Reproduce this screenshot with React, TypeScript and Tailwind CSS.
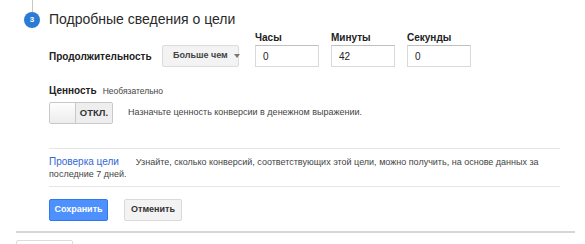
const font = { fontFamily: '"Liberation Sans", Arial, sans-serif' };

function TimeField({ label, value }: { label: string; value: string }) {
  return (
    <div className="flex flex-col w-[64px]">
      <span className="text-[10px] leading-[12px] font-bold text-[#222] mb-[1px]">{label}</span>
      <div className="h-[22px] border border-[#d9d9d9] border-t-[#c0c0c0] bg-white pl-[7px] flex items-center text-[10px] text-[#222]">
        {value}
      </div>
    </div>
  );
}

export default function App() {
  return (
    <div className="w-[585px] h-[244px] bg-white overflow-hidden" style={font}>
      {/* step header */}
      <div className="flex items-start pl-[24px]">
        <div className="flex flex-col items-center w-[16px]">
          <div className="w-px h-[12px] bg-[#c6c6c6]" />
          <div className="w-[16px] h-[16px] rounded-full bg-[#2b7bd4] text-white text-[8px] font-bold flex items-center justify-center leading-none">
            3
          </div>
        </div>
        <h2 className="ml-[9px] mt-[10px] text-[14px] leading-[18px] text-[#2a2a2a]">Подробные сведения о цели</h2>
      </div>

      <div className="ml-[49px] w-[511px]">
        {/* duration */}
        <div className="flex items-end mt-[4px]">
          <span className="text-[10px] font-bold text-[#222] h-[22px] flex items-center w-[113px]">Продолжительность</span>
          <div className="h-[22px] w-[77px] border border-[#dcdcdc] bg-[#f3f3f3] rounded-[2px] flex items-center pl-[10px] text-[9px] font-bold text-[#444] whitespace-nowrap">
            Больше чем
            <span className="ml-[6px] w-0 h-0 border-l-[3.5px] border-r-[3.5px] border-t-[4px] border-l-transparent border-r-transparent border-t-[#777]" />
          </div>
          <div className="flex gap-[12px] ml-[16px]">
            <TimeField label="Часы" value="0" />
            <TimeField label="Минуты" value="42" />
            <TimeField label="Секунды" value="0" />
          </div>
        </div>

        {/* value */}
        <div className="mt-[18px] h-[12px] flex items-baseline leading-[12px]">
          <span className="text-[10px] font-bold text-[#222]">Ценность</span>
          <span className="ml-[6px] text-[8.5px] text-[#444]">Необязательно</span>
        </div>
        <div className="mt-[5px] flex items-center">
          <div className="flex h-[22px] w-[64px] border border-[#c8c8c8] rounded-[2px] overflow-hidden">
            <div className="w-[26px] h-full bg-gradient-to-b from-[#fefefe] to-[#ececec] border-r border-[#c8c8c8]" />
            <div className="flex-1 bg-[#eeeeee] flex items-center justify-center text-[9.5px] font-bold text-[#333]">
              ОТКЛ.
            </div>
          </div>
          <span className="ml-[15px] text-[9px] text-[#444]">Назначьте ценность конверсии в денежном выражении.</span>
        </div>

        <div className="mt-[24px] h-px bg-[#e5e5e5]" />

        <p className="pt-[7px] pb-[6px] text-[9px] leading-[12px] text-[#444]">
          <span className="text-[#3367d6] text-[10px] mr-[17px]">Проверка цели</span>
          Узнайте, сколько конверсий, соответствующих этой цели, можно получить, на основе данных за последние 7 дней.
        </p>

        <div className="h-px bg-[#e5e5e5]" />

        <div className="mt-[12px] flex gap-[16px]">
          <button className="h-[22px] w-[59px] bg-[#4d90fe] border border-[#3079ed] rounded-[2px] text-white text-[9px] font-bold">
            Сохранить
          </button>
          <button className="h-[22px] w-[58px] bg-[#f3f3f3] border border-[#d9d9d9] rounded-[2px] text-[#333] text-[9px] font-bold">
            Отменить
          </button>
        </div>
      </div>

      <div className="ml-[16px] w-[559px] mt-[10px] h-[2px] bg-[#d6d6d6]" />
      <div className="ml-[16px] w-[57px] mt-[7px] h-[10px] border border-[#dcdcdc] rounded-[2px]" />
    </div>
  );
}
